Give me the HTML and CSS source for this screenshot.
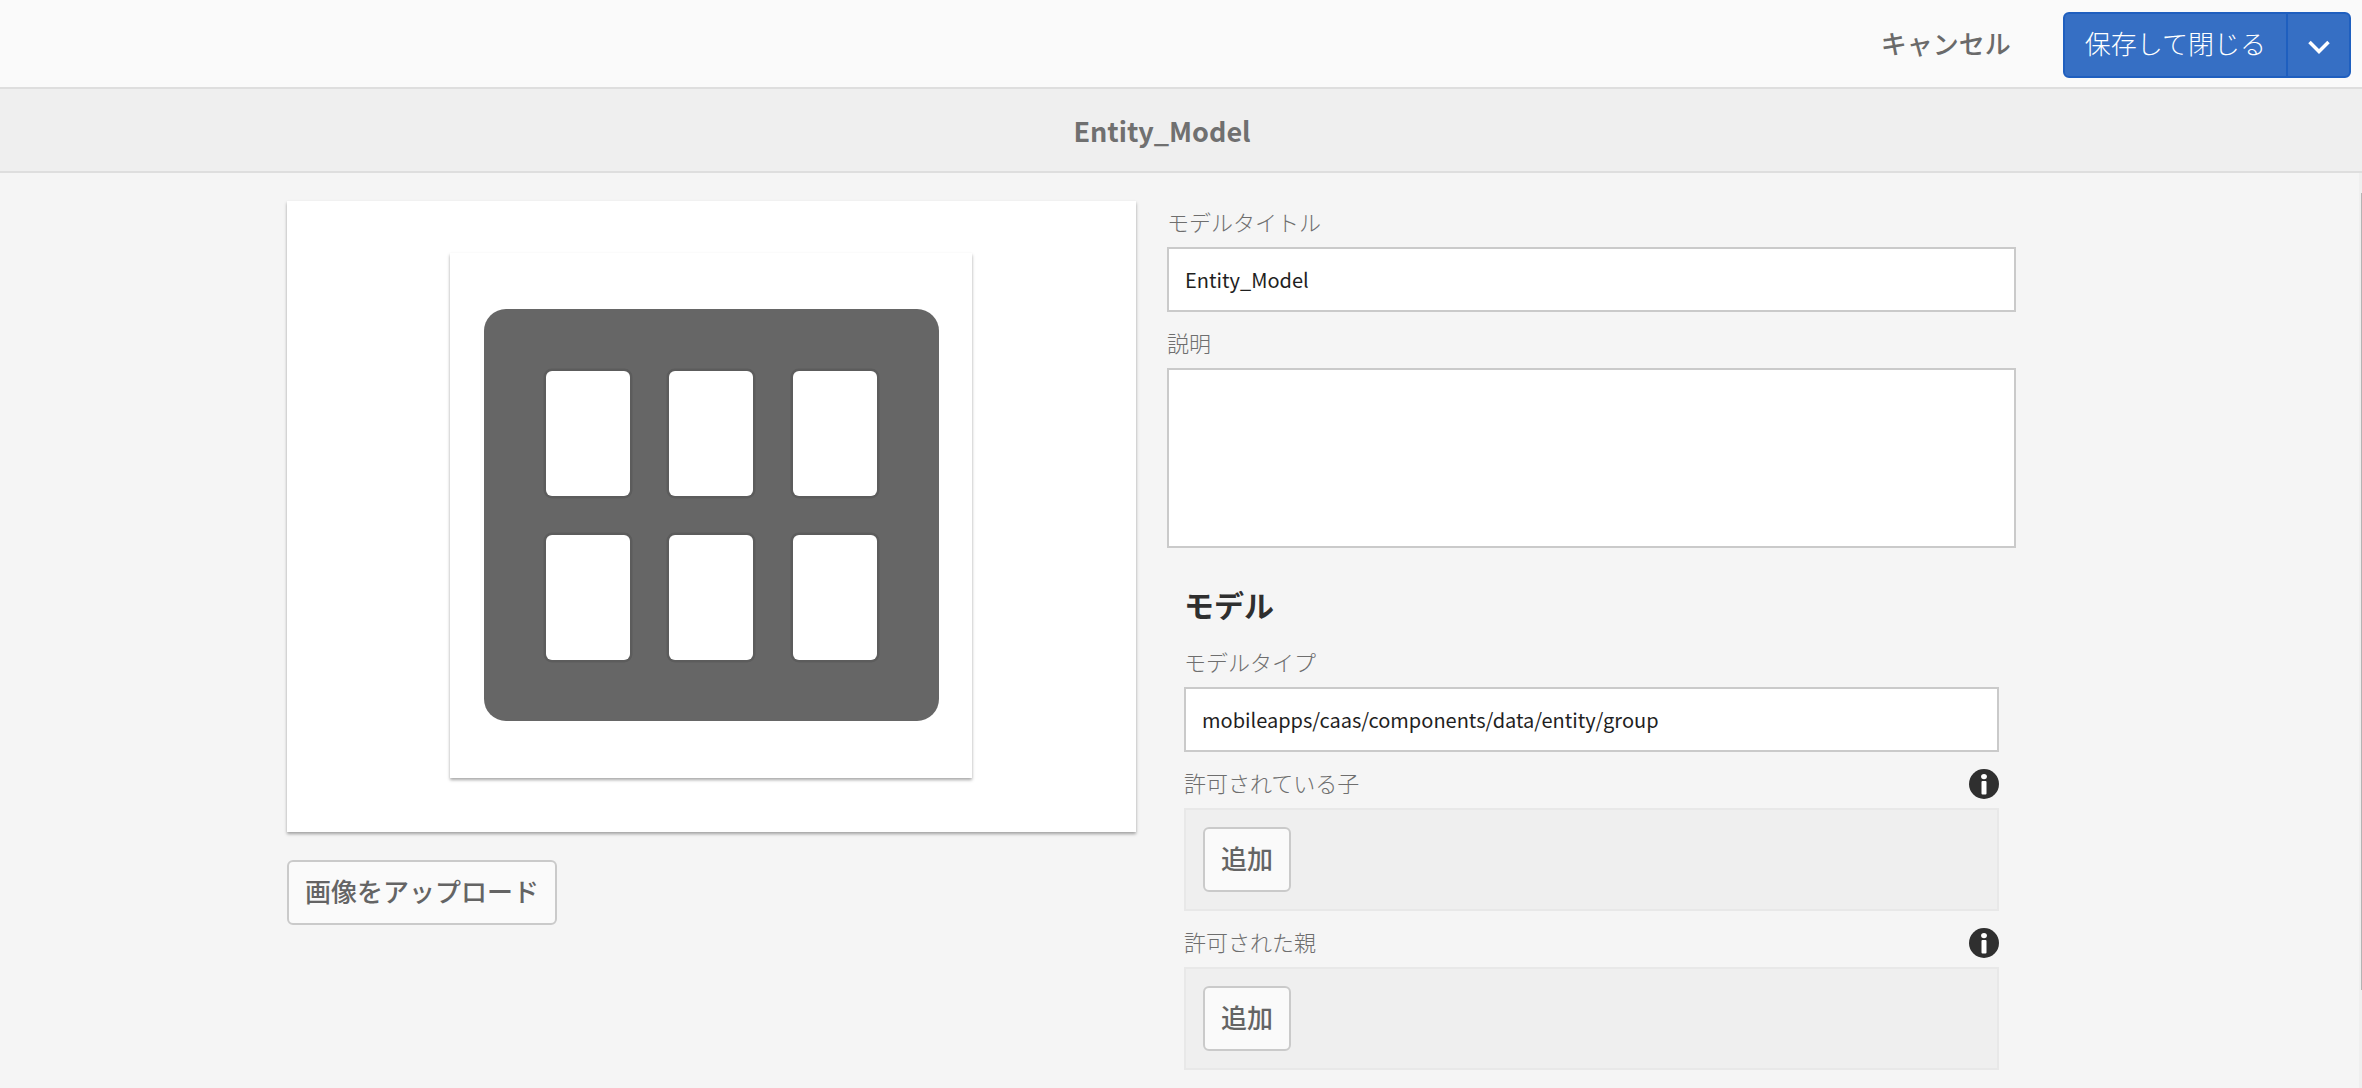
FILE: index.html
```html
<!DOCTYPE html>
<html lang="ja">
<head>
<meta charset="utf-8">
<title>Entity_Model</title>
<link rel="stylesheet" href="styles.css">
</head>
<body>
<header class="actions">
  <button type="button" class="cancel">キャンセル</button>
  <div class="split">
    <button type="button" class="split-main">保存して閉じる</button>
    <button type="button" class="split-toggle" aria-label="その他の保存オプション">
      <svg width="24" height="16" viewBox="0 0 24 16" aria-hidden="true"><path d="M2.500 3l9.500 9.500L21.500 3" fill="none" stroke="currentColor" stroke-width="3.500"/></svg>
    </button>
  </div>
</header>
<div class="titlebar"><h1>Entity_Model</h1></div>
<div class="page">
  <main class="content">
    <section class="media">
      <div class="card">
        <div class="thumb">
          <svg class="thumb-art" viewBox="0 0 455 412" aria-hidden="true">
            <rect width="455" height="412" rx="22" fill="#666"/>
            <g fill="#fff" stroke="#5c5c5c" stroke-width="5" paint-order="stroke">
              <rect x="62" y="62" width="84" height="125" rx="6"/>
              <rect x="185" y="62" width="84" height="125" rx="6"/>
              <rect x="309" y="62" width="84" height="125" rx="6"/>
              <rect x="62" y="226" width="84" height="125" rx="6"/>
              <rect x="185" y="226" width="84" height="125" rx="6"/>
              <rect x="309" y="226" width="84" height="125" rx="6"/>
            </g>
          </svg>
        </div>
      </div>
      <button type="button" class="btn">画像をアップロード</button>
    </section>
    <form class="fields">
      <div class="label-row"><label for="model-title">モデルタイトル</label></div>
      <input class="box" id="model-title" type="text" value="Entity_Model">
      <div class="label-row"><label for="description">説明</label></div>
      <textarea class="box area" id="description"></textarea>
      <section class="model">
        <h2>モデル</h2>
        <div class="label-row"><label for="model-type">モデルタイプ</label></div>
        <input class="box" id="model-type" type="text" value="mobileapps/caas/components/data/entity/group">
        <div class="label-row">
          <span id="children-label">許可されている子</span>
          <svg class="info" viewBox="0 0 30 30" aria-hidden="true"><circle cx="15" cy="15" r="15" fill="#2f2f2f"/><ellipse cx="15" cy="7.600" rx="2.900" ry="2.600" fill="#fff"/><rect x="12.500" y="12" width="5" height="13.500" rx="1" fill="#fff"/></svg>
        </div>
        <div class="well" role="group" aria-labelledby="children-label"><button type="button" class="btn">追加</button></div>
        <div class="label-row">
          <span id="parents-label">許可された親</span>
          <svg class="info" viewBox="0 0 30 30" aria-hidden="true"><circle cx="15" cy="15" r="15" fill="#2f2f2f"/><ellipse cx="15" cy="7.600" rx="2.900" ry="2.600" fill="#fff"/><rect x="12.500" y="12" width="5" height="13.500" rx="1" fill="#fff"/></svg>
        </div>
        <div class="well" role="group" aria-labelledby="parents-label"><button type="button" class="btn">追加</button></div>
      </section>
    </form>
  </main>
  <div class="scroll-track"><div class="scroll-thumb"></div></div>
</div>
</body>
</html>
```
FILE: styles.css
```css
* { box-sizing: border-box; }

body {
  margin: 0;
  min-height: 100vh;
  display: flex;
  flex-direction: column;
  background: #f5f5f5;
  color: #2f2f2f;
  font-family: "Noto Sans CJK JP", sans-serif;
}

button, input, textarea { font-family: inherit; margin: 0; }

.actions {
  display: flex;
  justify-content: flex-end;
  align-items: center;
  gap: 32px;
  height: 89px;
  padding: 3px 11px 0;
  background: #fafafa;
  border-bottom: 2px solid #dedede;
}

.cancel {
  height: 66px;
  padding: 0 20px 6px;
  border: 0;
  background: none;
  color: #6a6a6a;
  font-size: 26px;
  font-weight: 500;
}

.split {
  display: flex;
  height: 66px;
  border: 2px solid #1f5fbf;
  border-radius: 6px;
  background: #366fc4;
}

.split button {
  border: 0;
  background: none;
  color: #fff;
  font-size: 26px;
  font-weight: 300;
}

.split .split-main { padding: 0 20px 6px; }

.split .split-toggle {
  display: flex;
  align-items: center;
  justify-content: center;
  width: 63px;
  padding: 4px 0 0;
  border-left: 2px solid #1f5fbf;
}

.titlebar {
  display: flex;
  align-items: center;
  justify-content: center;
  height: 84px;
  padding-right: 38px;
  background: #efefef;
  border-bottom: 2px solid #dedede;
}

h1 {
  margin: 0;
  color: #707070;
  font-size: 27px;
  font-weight: 700;
}

.page { flex: 1; display: flex; }

.content {
  flex: 1;
  display: grid;
  grid-template-columns: 1fr 1fr;
  gap: 31px;
  padding: 18px 343px 18px 287px;
}

.media {
  display: flex;
  flex-direction: column;
  align-items: flex-start;
  gap: 28px;
  padding-top: 10px;
}

.card, .thumb {
  background: #fff;
  box-shadow: 0 2px 3px rgba(0, 0, 0, 0.350);
}

.card {
  display: flex;
  justify-content: center;
  width: 100%;
  padding: 52px 54px 54px 52px;
}

.thumb {
  display: flex;
  align-items: center;
  justify-content: center;
  width: 522px;
  height: 525px;
  padding: 0 0 2px 2px;
}

.thumb-art { width: 455px; height: 412px; }

.btn {
  height: 65px;
  padding: 0 16px 4px;
  border: 2px solid #cacaca;
  border-radius: 6px;
  background: #fafafa;
  color: #646464;
  font-size: 26px;
  font-weight: 500;
}

.fields { display: flex; flex-direction: column; }

.label-row {
  display: flex;
  align-items: center;
  justify-content: space-between;
  height: 56px;
  padding-top: 8px;
  color: #6e6e6e;
  font-size: 22px;
  font-weight: 300;
}

.label-row label, .label-row span { padding-bottom: 4px; }

.info { width: 30px; height: 30px; }

.box {
  width: 100%;
  height: 65px;
  padding: 0 16px;
  border: 2px solid #cacaca;
  border-radius: 0;
  background: #fff;
  color: #1f1f1f;
  font-size: 20px;
}

.area {
  display: block;
  height: 180px;
  padding: 16px;
  resize: none;
}

.model { padding: 33px 17px 0; }

h2 {
  margin: 0 0 4px;
  font-size: 30px;
  font-weight: 700;
  line-height: 46px;
}

.well {
  height: 103px;
  padding: 17px;
  border: 2px solid #e8e8e8;
  background: #efefef;
}

.scroll-track {
  width: 3px;
  padding: 20px 0 0 2px;
  background: #efefef;
}

.scroll-thumb { height: 89%; background: #b4b4b4; }
```
